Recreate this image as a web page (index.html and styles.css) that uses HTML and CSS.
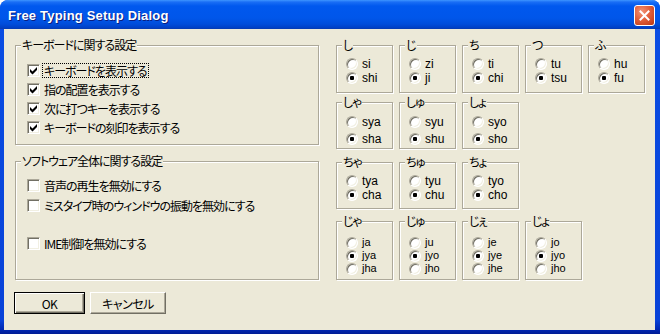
FILE: index.html
```html
<!doctype html>
<html lang="ja">
<head>
    <meta charset="UTF-8">
    <title>Free Typing Setup Dialog</title>
    <link rel="stylesheet" href="styles.css">
</head>
<body>
<div class="window">
    <div class="titlebar">
        <span class="title">Free Typing Setup Dialog</span>
        <span class="close">
            <svg width="11" height="11" viewBox="0 0 11 11">
                <path d="M1.5 1.5 L9.5 9.5 M9.5 1.5 L1.5 9.5" stroke="#fff" stroke-width="2" stroke-linecap="square"/>
            </svg>
        </span>
    </div>
    <div class="client">
        <div class="left">
            <div class="group group_keyboard">
                <span class="legend">キーボードに関する設定</span>
                <label class="check"><span class="box on"></span><span class="text focus">キーボードを表示する</span></label>
                <label class="check"><span class="box on"></span><span class="text">指の配置を表示する</span></label>
                <label class="check"><span class="box on"></span><span class="text">次に打つキーを表示する</span></label>
                <label class="check"><span class="box on"></span><span class="text">キーボードの刻印を表示する</span></label>
            </div>
            <div class="group group_soft">
                <span class="legend">ソフトウェア全体に関する設定</span>
                <label class="check"><span class="box"></span><span class="text">音声の再生を無効にする</span></label>
                <label class="check"><span class="box"></span><span class="text">ミスタイプ時のウィンドウの振動を無効にする</span></label>
                <label class="check spaced"><span class="box"></span><span class="text">IME制御を無効にする</span></label>
            </div>
            <div class="buttons">
                <button class="btn default">OK</button>
                <button class="btn cancel">キャンセル</button>
            </div>
        </div>

        <div class="right">
            <div class="kana_row row1">
                <div class="group kana"><span class="legend">し</span>
                    <label class="radio"><span class="dot"></span>si</label>
                    <label class="radio"><span class="dot on"></span>shi</label>
                </div>
                <div class="group kana"><span class="legend">じ</span>
                    <label class="radio"><span class="dot"></span>zi</label>
                    <label class="radio"><span class="dot on"></span>ji</label>
                </div>
                <div class="group kana"><span class="legend">ち</span>
                    <label class="radio"><span class="dot"></span>ti</label>
                    <label class="radio"><span class="dot on"></span>chi</label>
                </div>
                <div class="group kana"><span class="legend">つ</span>
                    <label class="radio"><span class="dot"></span>tu</label>
                    <label class="radio"><span class="dot on"></span>tsu</label>
                </div>
                <div class="group kana"><span class="legend">ふ</span>
                    <label class="radio"><span class="dot"></span>hu</label>
                    <label class="radio"><span class="dot on"></span>fu</label>
                </div>
            </div>

            <div class="kana_row row2">
                <div class="group kana"><span class="legend">しゃ</span>
                    <label class="radio"><span class="dot"></span>sya</label>
                    <label class="radio"><span class="dot on"></span>sha</label>
                </div>
                <div class="group kana"><span class="legend">しゅ</span>
                    <label class="radio"><span class="dot"></span>syu</label>
                    <label class="radio"><span class="dot on"></span>shu</label>
                </div>
                <div class="group kana"><span class="legend">しょ</span>
                    <label class="radio"><span class="dot"></span>syo</label>
                    <label class="radio"><span class="dot on"></span>sho</label>
                </div>
            </div>

            <div class="kana_row row3">
                <div class="group kana"><span class="legend">ちゃ</span>
                    <label class="radio"><span class="dot"></span>tya</label>
                    <label class="radio"><span class="dot on"></span>cha</label>
                </div>
                <div class="group kana"><span class="legend">ちゅ</span>
                    <label class="radio"><span class="dot"></span>tyu</label>
                    <label class="radio"><span class="dot on"></span>chu</label>
                </div>
                <div class="group kana"><span class="legend">ちょ</span>
                    <label class="radio"><span class="dot"></span>tyo</label>
                    <label class="radio"><span class="dot on"></span>cho</label>
                </div>
            </div>

            <div class="kana_row row4">
                <div class="group kana"><span class="legend">じゃ</span>
                    <label class="radio"><span class="dot"></span>ja</label>
                    <label class="radio"><span class="dot on"></span>jya</label>
                    <label class="radio"><span class="dot"></span>jha</label>
                </div>
                <div class="group kana"><span class="legend">じゅ</span>
                    <label class="radio"><span class="dot"></span>ju</label>
                    <label class="radio"><span class="dot on"></span>jyo</label>
                    <label class="radio"><span class="dot"></span>jho</label>
                </div>
                <div class="group kana"><span class="legend">じぇ</span>
                    <label class="radio"><span class="dot"></span>je</label>
                    <label class="radio"><span class="dot on"></span>jye</label>
                    <label class="radio"><span class="dot"></span>jhe</label>
                </div>
                <div class="group kana"><span class="legend">じょ</span>
                    <label class="radio"><span class="dot"></span>jo</label>
                    <label class="radio"><span class="dot on"></span>jyo</label>
                    <label class="radio"><span class="dot"></span>jho</label>
                </div>
            </div>
        </div>
    </div>
</div>
</body>
</html>
```

FILE: styles.css
```css
html, body {
    margin: 0;
    padding: 0;
}

body {
    width: 660px;
    height: 334px;
    overflow: hidden;
    background: #fff;
    color: #000;
    font-family: "Noto Sans CJK JP", sans-serif;
    font-size: 12px;
    font-feature-settings: "palt";
}

.window {
    width: 660px;
    height: 334px;
    box-sizing: border-box;
    display: flex;
    flex-direction: column;
    border-radius: 8px 8px 0 0;
    overflow: hidden;
    background: linear-gradient(to bottom, #0a4ee4 0, #0842d8 320px, #0026b0 330px, #001c94 334px);
}

.titlebar {
    flex: none;
    height: 29px;
    box-sizing: border-box;
    display: flex;
    align-items: center;
    padding: 3px 5px 0 8px;
    background: linear-gradient(to bottom, #3d95ff 0, #1a6ef5 2px, #0058ee 6px, #0056ea 18px, #004ddb 24px, #003fc4 28px, #0a3aa8 29px);
}

.title {
    flex: 1;
    color: #fff;
    font-family: "Liberation Sans", sans-serif;
    font-weight: bold;
    font-size: 13px;
    line-height: 26px;
    text-shadow: 1px 1px 0 #0a1e80;
    letter-spacing: 0.2px;
}

.close {
    align-self: flex-start;
    margin-top: 2px;
    width: 21px;
    height: 21px;
    box-sizing: border-box;
    border: 1px solid #fff;
    border-radius: 3px;
    display: flex;
    align-items: center;
    justify-content: center;
    background: radial-gradient(circle at 35% 30%, #f39477 0, #e2603c 45%, #c94420 80%, #b33813 100%);
}

.close svg {
    display: block;
}

.client {
    flex: 1;
    margin: 0 5px 4px 4px;
    background: #ece9d8;
    display: flex;
    gap: 16px;
    padding: 16px 0 0 11px;
}

.left {
    flex: none;
    width: 305px;
}

.group {
    position: relative;
    box-sizing: border-box;
    border: 1px solid #aca899;
    box-shadow: inset 1px 1px 0 #fff, 1px 1px 0 #fff;
}

.legend {
    position: absolute;
    top: -8px;
    left: 5px;
    padding: 0 1px;
    line-height: 14px;
    letter-spacing: -1px;
    background: #ece9d8;
    white-space: nowrap;
}

.group_keyboard {
    width: 304px;
    height: 100px;
    padding: 15px 0 0 11px;
}

.group_soft {
    width: 304px;
    height: 119px;
    margin-top: 16px;
    padding: 13px 0 0 11px;
}

.check {
    display: flex;
    align-items: center;
    height: 19px;
}

.group_soft .check {
    height: 20px;
}

.group_soft .spaced {
    margin-top: 18px;
}

.box {
    flex: none;
    position: relative;
    width: 13px;
    height: 13px;
    box-sizing: border-box;
    margin-right: 2px;
    background: #fff;
    border: 1px solid;
    border-color: #aca899 #fff #fff #aca899;
    box-shadow: inset 1px 1px 0 #716f64, inset -1px -1px 0 #f1efe2;
}

.box.on::after {
    content: "";
    position: absolute;
    left: 0;
    top: 0;
    width: 11px;
    height: 11px;
    background: url("data:image/svg+xml,%3Csvg xmlns='http://www.w3.org/2000/svg' width='11' height='11'%3E%3Cpolygon points='2,4 4.5,6.5 9,2 9,5 4.5,9.5 2,7' fill='%23000'/%3E%3C/svg%3E") no-repeat;
}

.text {
    border: 1px solid transparent;
    padding: 0 1px;
    line-height: 13px;
    letter-spacing: -1px;
    white-space: nowrap;
}

.text.focus {
    border: 1px dotted #000;
}

.buttons {
    display: flex;
    gap: 5px;
    margin: 12px 0 0 -1px;
}

.btn {
    height: 22px;
    padding: 0;
    font-family: "Noto Sans CJK JP", sans-serif;
    font-size: 12px;
    font-feature-settings: "palt";
    letter-spacing: -0.5px;
    color: #000;
    background: #ece9d8;
    border: 1px solid;
    border-color: #fff #716f64 #716f64 #fff;
    box-shadow: inset -1px -1px 0 #aca899;
}

.btn.default {
    width: 71px;
    border: 1px solid #000;
    box-shadow: inset 1px 1px 0 #fff, inset -1px -1px 0 #716f64, inset -2px -2px 0 #aca899;
}

.btn.cancel {
    width: 76px;
}

.right {
    flex: none;
}

.kana_row {
    display: flex;
    gap: 6px;
}

.kana {
    width: 57px;
    padding-left: 9px;
}

.radio {
    display: flex;
    align-items: center;
    gap: 4px;
    height: 14px;
    font-family: "Liberation Sans", sans-serif;
    font-size: 12px;
    line-height: 14px;
    white-space: nowrap;
}

.dot {
    flex: none;
    position: relative;
    width: 12px;
    height: 12px;
    box-sizing: border-box;
    border-radius: 50%;
    background: #fff;
    border: 1px solid;
    border-color: #aca899 #fff #fff #aca899;
    box-shadow: inset 1px 1px 0 #716f64, inset -1px -1px 0 #f1efe2;
}

.dot.on::after {
    content: "";
    position: absolute;
    left: 3px;
    top: 3px;
    width: 4px;
    height: 4px;
    border-radius: 1px;
    background: #000;
}

.row1 .kana {
    height: 48px;
    padding-top: 11px;
}

.row2 {
    margin-top: 9px;
}

.row2 .kana {
    height: 47px;
    padding-top: 10px;
}

.row2 .radio {
    height: 17px;
}

.row3 {
    margin-top: 13px;
}

.row3 .kana {
    height: 47px;
    padding-top: 11px;
}

.row4 {
    margin-top: 12px;
}

.row4 .kana {
    height: 59px;
    padding-top: 14px;
}

.row4 .radio {
    height: 13px;
    font-size: 11px;
    line-height: 13px;
}
```
